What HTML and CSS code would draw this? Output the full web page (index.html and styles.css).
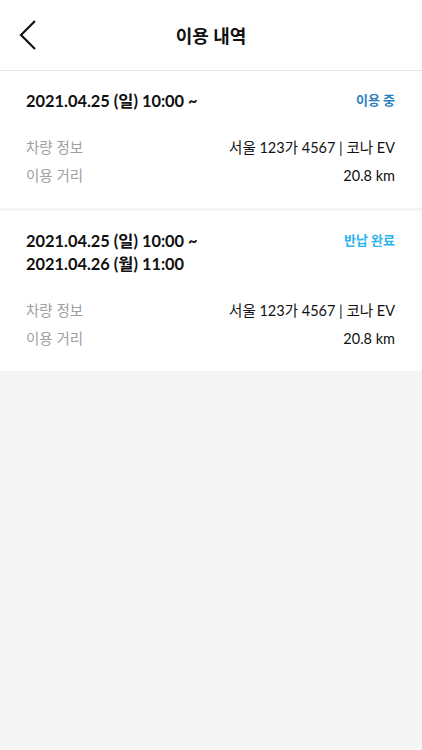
FILE: index.html
```html
<!DOCTYPE html>
<html lang="ko">
<head>
    <meta charset="UTF-8">
    <meta name="viewport" content="width=device-width, initial-scale=1.0">
    <title>이용 내역</title>
    <link rel="stylesheet" href="styles.css">
</head>
<body>
    <div class="header">
        <a href="#" class="back-btn">
            <svg width="20" height="32" viewBox="0 0 20 32">
                <path d="M16 2 L2 16 L16 30" fill="none" stroke="#111" stroke-width="2.2"/>
            </svg>
        </a>
        <h1>이용 내역</h1>
    </div>

    <div class="history-list">
        <div class="card">
            <div class="card-top">
                <div class="date">2021.04.25 (일) 10:00 ~</div>
                <div class="status in-use">이용 중</div>
            </div>
            <div class="row">
                <span class="label">차량 정보</span>
                <span class="value">서울 123가 4567 | 코나 EV</span>
            </div>
            <div class="row">
                <span class="label">이용 거리</span>
                <span class="value">20.8 km</span>
            </div>
        </div>

        <div class="card">
            <div class="card-top">
                <div class="date">2021.04.25 (일) 10:00 ~<br>2021.04.26 (월) 11:00</div>
                <div class="status returned">반납 완료</div>
            </div>
            <div class="row">
                <span class="label">차량 정보</span>
                <span class="value">서울 123가 4567 | 코나 EV</span>
            </div>
            <div class="row">
                <span class="label">이용 거리</span>
                <span class="value">20.8 km</span>
            </div>
        </div>
    </div>
</body>
</html>
```

FILE: styles.css
```css
/* Base */
body {
    margin: 0;
    font-family: "Lato", "Noto Sans CJK KR", sans-serif;
    background: #f5f5f5;
    color: #111;
    min-height: 750px;
}

/* Header */
.header {
    height: 70px;
    background: #fff;
    border-bottom: 1px solid #e6e6e6;
    display: flex;
    align-items: center;
    justify-content: center;
    position: relative;
}
.header h1 {
    margin: 0;
    font-size: 18px;
    font-weight: bold;
}
.back-btn {
    position: absolute;
    left: 19px;
    top: 19px;
    display: block;
    line-height: 0;
}

/* Cards */
.history-list {
    display: flex;
    flex-direction: column;
    gap: 3px;
}
.card {
    background: #fff;
    padding: 18px 27px 18px 26px;
}
.card-top {
    display: flex;
    justify-content: space-between;
    align-items: flex-start;
    margin-bottom: 22px;
}
.date {
    font-size: 16.4px;
    font-weight: bold;
    line-height: 23px;
}
.status {
    font-size: 13px;
    font-weight: bold;
    line-height: 23px;
}
.status.in-use { color: #2b7fc1; }
.status.returned { color: #2cb4ec; }

.row {
    display: flex;
    justify-content: space-between;
    font-size: 14.5px;
    line-height: 28px;
}
.label { color: #a0a0a0; }
.value { color: #111; }
```
